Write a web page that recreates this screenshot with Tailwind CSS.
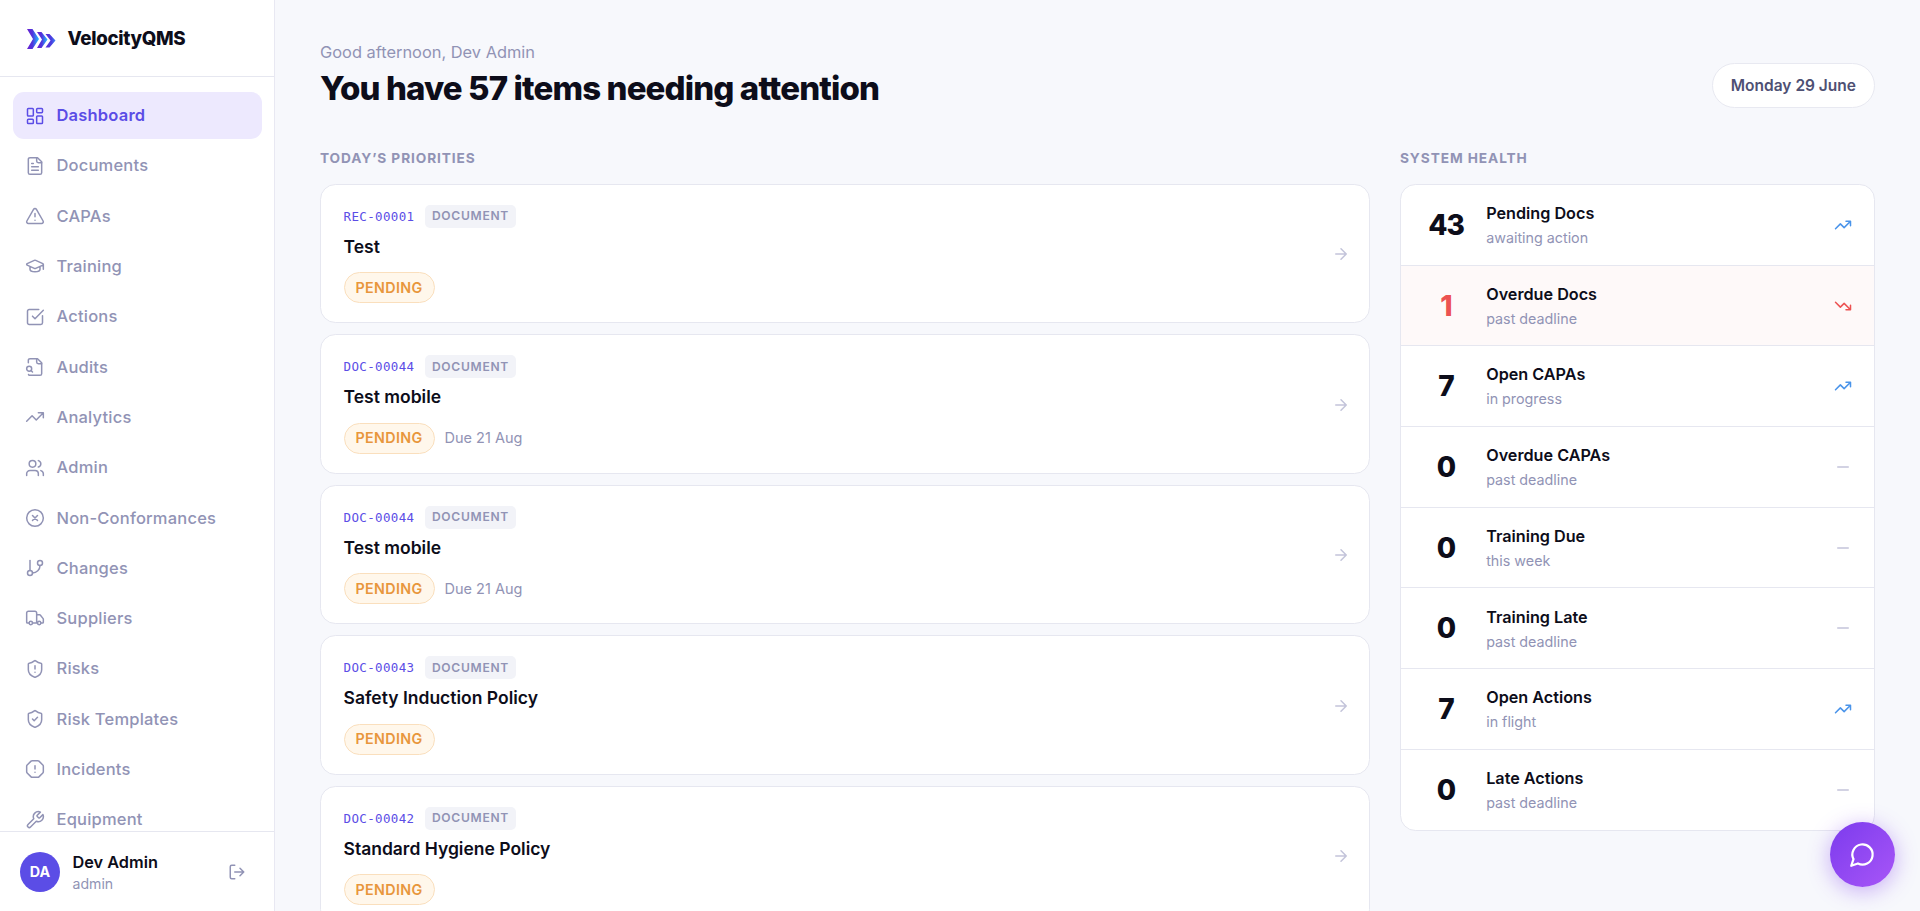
<!DOCTYPE html>
<html lang="en">
<head>
<meta charset="utf-8">
<title>VelocityQMS</title>
<script src="https://cdn.jsdelivr.net/npm/@tailwindcss/browser@4"></script>
</head>
<body class="h-screen overflow-hidden flex bg-[#f7f8fc] font-['Inter',sans-serif] text-[#0d0d1a]">
<aside class="w-[275px] h-full shrink-0 flex flex-col bg-white border-r border-[#e8e8f2]">
  <div class="h-[77px] shrink-0 flex items-center gap-[11.500px] pl-[27px] pt-[2px] border-b border-[#e6e7f0]">
    <svg class="w-[29px] h-[20px]" viewBox="0 0 29 20">
      <defs><linearGradient id="lg" x1="0" y1="0" x2="1" y2="0"><stop offset="0" stop-color="#6a1fd0"/><stop offset=".45" stop-color="#4f35dc"/><stop offset=".95" stop-color="#22b4ff"/></linearGradient>
      <linearGradient id="lg3" x1="0" y1="0" x2="1" y2="0"><stop offset="0" stop-color="#5a2bd6"/><stop offset=".6" stop-color="#4a3fe0"/><stop offset="1" stop-color="#3a86f5"/></linearGradient></defs>
      <path fill="url(#lg)" d="M0 0h5.500l6.500 10-6.500 10H0l6-10z"/>
      <path fill="url(#lg)" d="M10 3h4.500l6 7.500-6 8.500H10l5-8.500z"/>
      <path fill="url(#lg3)" d="M18.500 5h4l6 6.500-6 7h-4l5-7z"/>
    </svg>
    <span class="text-[18.700px] font-extrabold tracking-[-0.330px]">VelocityQMS</span>
  </div>
  <nav id="nav" class="flex-1 min-h-0 overflow-hidden flex flex-col gap-[3.300px] px-[12.500px] pt-[15px]"></nav>
  <div class="h-[80px] shrink-0 flex items-center border-t border-[#e6e7f0] pl-[20px] pr-[28px]">
    <div class="size-[40px] rounded-full bg-[#5b4de6] text-white text-[14.300px] font-bold flex items-center justify-center">DA</div>
    <div class="ml-[12.500px] pt-[2px] flex-1 flex flex-col">
      <span class="text-[16.300px] leading-[22px] font-semibold">Dev Admin</span>
      <span class="text-[14.100px] leading-[21px] text-[#9193b5]">admin</span>
    </div>
    <svg class="size-[18px]" viewBox="0 0 24 24" fill="none" stroke="#9193b5" stroke-width="2" stroke-linecap="round" stroke-linejoin="round"><path d="M9 21H5a2 2 0 0 1-2-2V5a2 2 0 0 1 2-2h4M16 17l5-5-5-5M21 12H9"/></svg>
  </div>
</aside>
<main class="flex-1 min-w-0 pl-[45px] pr-[45.500px] pt-[40px]">
  <header class="flex items-end justify-between">
    <div class="flex flex-col">
      <span class="text-[16.400px] leading-[25px] text-[#9193b5]">Good afternoon, Dev Admin</span>
      <h1 class="text-[33px] leading-[38px] mt-[4px] font-extrabold tracking-[-0.870px]">You have 57 items needing attention</h1>
    </div>
    <div class="h-[45px] px-[17.500px] mb-[-1px] flex items-center rounded-full bg-white border border-[#e8e9f1] text-[15.500px] font-semibold text-[#4e5073]">Monday 29 June</div>
  </header>
  <div class="mt-[39.600px] flex gap-[30px]">
    <section class="w-[1050px]">
      <h2 class="text-[13.700px] leading-[22px] font-bold tracking-[0.900px] text-[#9193b5]">TODAY’S PRIORITIES</h2>
      <div id="cards" class="mt-[15.400px] flex flex-col gap-[11px]"></div>
    </section>
    <section class="flex-1">
      <h2 class="text-[13.700px] leading-[22px] font-bold tracking-[0.900px] text-[#9193b5]">SYSTEM HEALTH</h2>
      <div id="health" class="mt-[15.400px] rounded-[15.400px] border border-[#e6e7f0] bg-white overflow-hidden"></div>
    </section>
  </div>
</main>
<button class="fixed left-[1830px] top-[822px] size-[65px] rounded-full bg-linear-to-br from-[#7c3aed] to-[#a855f7] shadow-[0_4px_22px_rgba(124,58,237,0.4)] flex items-center justify-center">
  <svg class="size-[27px]" viewBox="0 0 24 24" fill="none" stroke="#fff" stroke-width="2" stroke-linecap="round" stroke-linejoin="round"><path d="M7.900 20A9 9 0 1 0 4 16.100L2 22Z"/></svg>
</button>
<script>
const nav = [
 ['Dashboard','<rect width="7" height="9" x="3" y="3" rx="1"/><rect width="7" height="5" x="14" y="3" rx="1"/><rect width="7" height="9" x="14" y="12" rx="1"/><rect width="7" height="5" x="3" y="16" rx="1"/>'],
 ['Documents','<path d="M15 2H6a2 2 0 0 0-2 2v16a2 2 0 0 0 2 2h12a2 2 0 0 0 2-2V7Z"/><path d="M14 2v4a2 2 0 0 0 2 2h4M10 9H8M16 13H8M16 17H8"/>'],
 ['CAPAs','<path d="m21.730 18-8-14a2 2 0 0 0-3.480 0l-8 14A2 2 0 0 0 4 21h16a2 2 0 0 0 1.730-3M12 9v4M12 17h.01"/>'],
 ['Training','<path d="M21.420 10.922a1 1 0 0 0-.019-1.838L12.830 5.180a2 2 0 0 0-1.660 0L2.600 9.080a1 1 0 0 0 0 1.832l8.570 3.908a2 2 0 0 0 1.660 0zM22 10v6M6 12.500V16a6 3 0 0 0 12 0v-3.500"/>'],
 ['Actions','<path d="M21 10.500V19a2 2 0 0 1-2 2H5a2 2 0 0 1-2-2V5a2 2 0 0 1 2-2h11.500M9 11l3 3L22 4"/>'],
 ['Audits','<path d="M14 2v4a2 2 0 0 0 2 2h4"/><path d="M4.268 21a2 2 0 0 0 1.727 1H18a2 2 0 0 0 2-2V7l-5-5H6a2 2 0 0 0-2 2v3"/><path d="m9 18-1.500-1.500"/><circle cx="5" cy="14" r="3"/>'],
 ['Analytics','<path d="M22 7 13.500 15.500 8.500 10.500 2 17M16 7h6v6"/>'],
 ['Admin','<path d="M16 21v-2a4 4 0 0 0-4-4H6a4 4 0 0 0-4 4v2"/><circle cx="9" cy="7" r="4"/><path d="M22 21v-2a4 4 0 0 0-3-3.870M16 3.130a4 4 0 0 1 0 7.750"/>'],
 ['Non-Conformances','<circle cx="12" cy="12" r="10"/><path d="m15 9-6 6M9 9l6 6"/>'],
 ['Changes','<path d="M6 3v12"/><circle cx="18" cy="6" r="3"/><circle cx="6" cy="18" r="3"/><path d="M18 9a9 9 0 0 1-9 9"/>'],
 ['Suppliers','<path d="M14 18V6a2 2 0 0 0-2-2H4a2 2 0 0 0-2 2v11a1 1 0 0 0 1 1h2M15 18H9M19 18h2a1 1 0 0 0 1-1v-3.650a1 1 0 0 0-.22-.624l-3.480-4.350A1 1 0 0 0 17.520 8H14"/><circle cx="17" cy="18" r="2"/><circle cx="7" cy="18" r="2"/>'],
 ['Risks','<path d="M20 13c0 5-3.500 7.500-7.660 8.950a1 1 0 0 1-.67-.01C7.500 20.500 4 18 4 13V6a1 1 0 0 1 1-1c2 0 4.500-1.200 6.240-2.720a1.170 1.170 0 0 1 1.520 0C14.510 3.810 17 5 19 5a1 1 0 0 1 1 1zM12 8v4M12 16h.01"/>'],
 ['Risk Templates','<path d="M20 13c0 5-3.500 7.500-7.660 8.950a1 1 0 0 1-.67-.01C7.500 20.500 4 18 4 13V6a1 1 0 0 1 1-1c2 0 4.500-1.200 6.240-2.720a1.170 1.170 0 0 1 1.520 0C14.510 3.810 17 5 19 5a1 1 0 0 1 1 1zM9 12l2 2 4-4"/>'],
 ['Incidents','<path d="M15.312 2a2 2 0 0 1 1.414.586l4.688 4.688A2 2 0 0 1 22 8.688v6.624a2 2 0 0 1-.586 1.414l-4.688 4.688a2 2 0 0 1-1.414.586H8.688a2 2 0 0 1-1.414-.586l-4.688-4.688A2 2 0 0 1 2 15.312V8.688a2 2 0 0 1 .586-1.414l4.688-4.688A2 2 0 0 1 8.688 2zM12 8v4M12 16h.01"/>'],
 ['Equipment','<path d="M14.700 6.300a1 1 0 0 0 0 1.400l1.600 1.600a1 1 0 0 0 1.400 0l3.770-3.770a6 6 0 0 1-7.940 7.940l-6.910 6.910a2.120 2.120 0 0 1-3-3l6.910-6.910a6 6 0 0 1 7.940-7.940l-3.760 3.760z"/>']
];
document.getElementById('nav').innerHTML = nav.map(([t, p], i) => `
  <a class="h-[47px] shrink-0 flex items-center gap-[11.500px] pl-[12.500px] rounded-[11px] ${i ? 'text-[#9193b5]' : 'bg-[#ede9fe] text-[#5b4de6]'}">
    <svg class="size-[20px]" viewBox="0 0 24 24" fill="none" stroke="currentColor" stroke-width="1.8" stroke-linecap="round" stroke-linejoin="round">${p}</svg>
    <span class="text-[16.500px] tracking-[0.200px] ${i ? 'font-medium' : 'font-semibold'}">${t}</span>
  </a>`).join('');

const cards = [['REC-00001','Test'],['DOC-00044','Test mobile','Due 21 Aug'],['DOC-00044','Test mobile','Due 21 Aug'],['DOC-00043','Safety Induction Policy'],['DOC-00042','Standard Hygiene Policy']];
document.getElementById('cards').innerHTML = cards.map(([id, t, due]) => `
  <article class="h-[139.500px] shrink-0 px-[22.500px] pt-[20px] flex justify-between rounded-[15.400px] bg-white border border-[#e6e7f0]">
    <div class="flex flex-col items-start">
      <div class="flex items-center gap-[10.500px] h-[23px]">
        <span class="pt-[1px] font-['DejaVu_Sans_Mono',monospace] text-[12.500px] tracking-[0.350px] text-[#5b4de6]">${id}</span>
        <span class="h-[23px] px-[7px] flex items-center rounded-[5px] bg-[#f2f3f8] text-[12.100px] font-semibold tracking-[0.7px] text-[#9193b5]">DOCUMENT</span>
      </div>
      <div class="mt-[7px] text-[17.500px] leading-[24px] font-semibold">${t}</div>
      <div class="mt-[13.200px] flex items-center gap-[10px]">
        <span class="h-[31px] px-[11px] flex items-center rounded-full bg-[#fff7eb] border border-[#fadfbd] text-[14.300px] font-semibold tracking-[0.350px] text-[#e8963c]">PENDING</span>
        ${due ? `<span class="text-[14.500px] text-[#9193b5]">${due}</span>` : ''}
      </div>
    </div>
    <svg class="size-[18px] mt-[40.300px] mr-[-3px]" viewBox="0 0 24 24" fill="none" stroke="#c3c4da" stroke-width="2" stroke-linecap="round" stroke-linejoin="round"><path d="M5 12h14M12 5l7 7-7 7"/></svg>
  </article>`).join('');

const up = '<path d="M22 7 13.500 15.500 8.500 10.500 2 17M16 7h6v6"/>', down = '<path d="M22 17 13.500 8.500 8.500 13.500 2 7M16 17h6v-6"/>', flat = '<path d="M5 12h14"/>';
const health = [['43','Pending Docs','awaiting action','text-[#4a94ea]',up],['1','Overdue Docs','past deadline','text-[#ec5252]',down],['7','Open CAPAs','in progress','text-[#4a94ea]',up],['0','Overdue CAPAs','past deadline','text-[#c3c4da]',flat],['0','Training Due','this week','text-[#c3c4da]',flat],['0','Training Late','past deadline','text-[#c3c4da]',flat],['7','Open Actions','in flight','text-[#4a94ea]',up],['0','Late Actions','past deadline','text-[#c3c4da]',flat]];
document.getElementById('health').innerHTML = health.map(([n, a, b, c, p], i) => `
  <div class="h-[80.700px] flex items-center pl-[17.500px] pr-[22px] ${i < 7 ? 'border-b border-[#e6e7f0]' : ''} ${i === 1 ? 'bg-[#fef9f9]' : ''}">
    <span class="w-[55px] text-center text-[28px] font-extrabold tracking-[-1px] ${i === 1 ? 'text-[#ec5252]' : ''}">${n}</span>
    <div class="ml-[12.700px] pt-[1.500px] flex-1 flex flex-col">
      <span class="text-[16.200px] leading-[23px] font-semibold">${a}</span>
      <span class="mt-[2px] text-[14.300px] leading-[22px] text-[#9193b5]">${b}</span>
    </div>
    <svg class="size-[18px] ${c}" viewBox="0 0 24 24" fill="none" stroke="currentColor" stroke-width="2" stroke-linecap="round" stroke-linejoin="round">${p}</svg>
  </div>`).join('');
</script>
</body>
</html>
